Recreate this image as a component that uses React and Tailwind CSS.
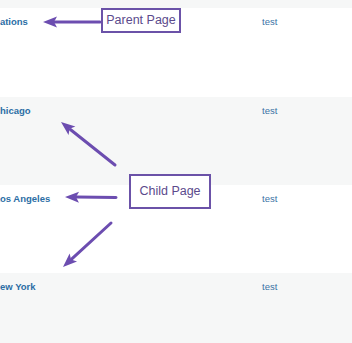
import React from 'react';

const rows = [
  { title: 'Locations', shift: 'ml-[-17px]', bg: 'bg-white', h: 'h-[89px]' },
  { title: '— Chicago', shift: 'ml-[-19px]', bg: 'bg-[#f6f7f7]', h: 'h-[88px]' },
  { title: '— Los Angeles', shift: 'ml-[-18px]', bg: 'bg-white', h: 'h-[88px]' },
  { title: '— New York', shift: 'ml-[-19px]', bg: 'bg-[#f6f7f7]', h: 'h-[70px]' },
];

const Row = ({ title, shift, bg, h }) => (
  <div className={`${bg} ${h} flex pt-[7px]`}>
    <div className="w-[262px] shrink-0">
      <span className={`block ${shift} whitespace-nowrap text-[9.5px] leading-[13px] font-bold text-[#2c6ea5]`}>
        {title}
      </span>
    </div>
    <span className="text-[9.5px] leading-[13px] text-[#3b73a6]">test</span>
  </div>
);

const Arrow = ({ x1, y1, x2, y2 }) => {
  // arrowhead at (x2, y2)
  const dx = x2 - x1;
  const dy = y2 - y1;
  const len = Math.hypot(dx, dy);
  const ux = dx / len;
  const uy = dy / len;
  const hl = 14;
  const hw = 5.5;
  const bx = x2 - ux * hl;
  const by = y2 - uy * hl;
  const pts = `${x2},${y2} ${bx - uy * hw},${by + ux * hw} ${bx + ux * 3},${by + uy * 3} ${bx + uy * hw},${by - ux * hw}`;
  return (
    <g>
      <line x1={x1} y1={y1} x2={bx + ux * 2} y2={by + uy * 2} stroke="#6c4db0" strokeWidth="3" strokeLinecap="round" />
      <polygon points={pts} fill="#6c4db0" />
    </g>
  );
};

export default function App() {
  return (
    <div className="relative w-[352px] h-[343px] overflow-hidden bg-[#f6f7f7] font-['Liberation_Sans',Arial,sans-serif]">
      <div className="h-[8px]" />
      {rows.map(r => <Row key={r.title} {...r} />)}

      <svg className="absolute inset-0 pointer-events-none" width="352" height="343" viewBox="0 0 352 343">
        <Arrow x1={100} y1={22} x2={43} y2={22} />
        <Arrow x1={115} y1={165} x2={61} y2={122} />
        <Arrow x1={116} y1={197.5} x2={65} y2={197} />
        <Arrow x1={111} y1={223} x2={63} y2={267} />
      </svg>

      <div className="absolute left-[101px] top-[8px] w-[80px] h-[25px] border-[2.5px] border-[#6b52a8] bg-white flex items-center justify-center">
        <span className="text-[12.5px] leading-none text-[#5b4a8c]">Parent Page</span>
      </div>
      <div className="absolute left-[129px] top-[174px] w-[82px] h-[35px] border-[2.5px] border-[#6b52a8] bg-white flex items-center justify-center">
        <span className="text-[12.5px] leading-none text-[#5b4a8c]">Child Page</span>
      </div>
    </div>
  );
}
